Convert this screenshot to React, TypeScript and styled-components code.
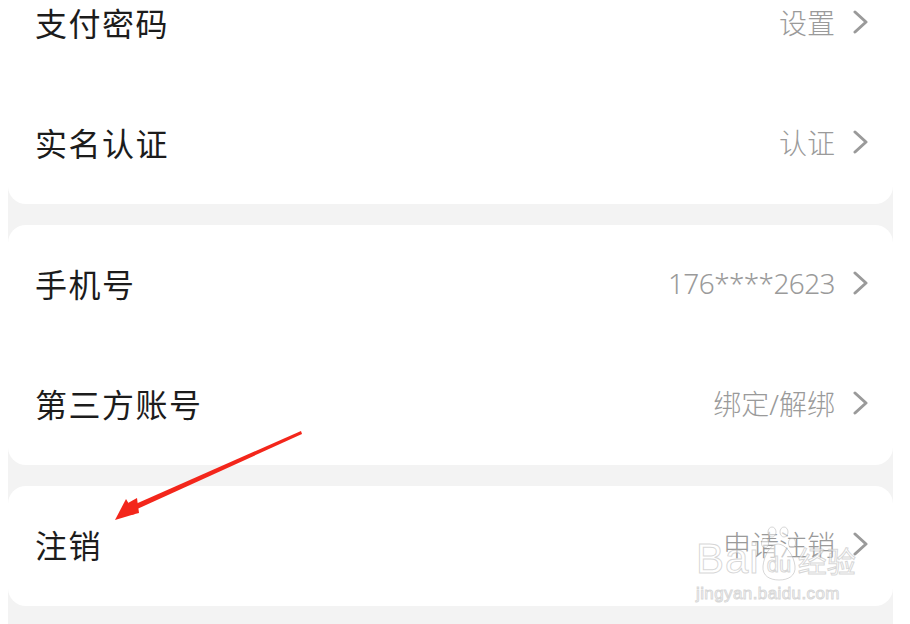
import styled, { createGlobalStyle } from 'styled-components';

const GlobalStyle = createGlobalStyle`
  html, body {
    margin: 0;
    padding: 0;
    background: #ffffff;
    overflow: hidden;
  }
  body {
    font-family: "Noto Sans", "Noto Sans CJK SC", sans-serif;
  }
`;

const Screen = styled.div`
  position: relative;
  width: 910px;
  height: 624px;
  overflow: hidden;
  background: #ffffff;
`;

const Panel = styled.div`
  margin: -36px 17px 0 8px;
  background: #f3f3f3;
  display: flex;
  flex-direction: column;
  gap: 21px;
  padding-bottom: 40px;
`;

const Card = styled.div`
  background: #ffffff;
  border-radius: 18px;
  display: flex;
  flex-direction: column;
`;

const Row = styled.div`
  height: 120px;
  box-sizing: border-box;
  display: flex;
  align-items: center;
  padding: 0 24px 5px 27px;
`;

const Label = styled.span`
  flex: 1;
  font-family: "Noto Sans CJK SC", sans-serif;
  font-size: 32px;
  color: #1c1c1c;
  letter-spacing: 1.5px;
`;

const Value = styled.span<{ $num?: boolean }>`
  font-family: "Noto Sans", "Noto Sans CJK SC", sans-serif;
  font-size: 28px;
  font-weight: 300;
  color: #9a9a9a;
  margin-right: 18px;
  letter-spacing: ${({ $num }) => ($num ? '-0.6px' : '0')};
`;

const Chevron = () => (
  <svg width="16" height="24" viewBox="0 0 16 24">
    <path d="M2 2 L13 12 L2 22" fill="none" stroke="#9a9a9a" strokeWidth="3" strokeLinecap="round" strokeLinejoin="round" />
  </svg>
);

const Arrow = styled.svg`
  position: absolute;
  left: 0;
  top: 0;
  pointer-events: none;
`;

const Watermark = styled.div`
  position: absolute;
  left: 696px;
  top: 524px;
  display: flex;
  flex-direction: column;
  align-items: flex-start;
  pointer-events: none;
  color: rgba(255, 255, 255, 0.55);
  -webkit-text-stroke: 1px rgba(175, 175, 175, 0.5);
  font-family: "Liberation Sans", "Noto Sans CJK SC", sans-serif;
`;

const MarkTop = styled.div`
  display: flex;
  align-items: flex-end;
  height: 58px;
`;

const MarkBai = styled.span`
  font-size: 42px;
  line-height: 46px;
  letter-spacing: 1px;
`;

const MarkJy = styled.span`
  font-family: "Noto Sans CJK SC", sans-serif;
  font-size: 29px;
  line-height: 44px;
`;

const MarkUrl = styled.div`
  font-size: 17px;
  line-height: 20px;
  letter-spacing: 0.4px;
  margin-top: 2px;
`;

const Paw = () => (
  <svg width="38" height="56" viewBox="0 0 38 56">
    <g fill="rgba(255,255,255,0.5)" stroke="rgba(175,175,175,0.5)" strokeWidth="1">
      <ellipse cx="12" cy="6" rx="4" ry="5" />
      <ellipse cx="24" cy="6" rx="4" ry="5" />
      <ellipse cx="5" cy="17" rx="3.5" ry="4.5" />
      <ellipse cx="32" cy="17" rx="3.5" ry="4.5" />
      <path d="M18 18 C10 18 4 30 3 40 C2 50 10 54 19 54 C28 54 36 50 35 40 C34 30 26 18 18 18 Z" />
    </g>
    <text x="19" y="46" textAnchor="middle" fontFamily="Liberation Sans, sans-serif" fontSize="22" fill="rgba(255,255,255,0.6)" stroke="rgba(175,175,175,0.5)" strokeWidth="1">du</text>
  </svg>
);

type Item = { label: string; value: string; num?: boolean };

const groups: Item[][] = [
  [
    { label: '支付密码', value: '设置' },
    { label: '实名认证', value: '认证' },
  ],
  [
    { label: '手机号', value: '176****2623', num: true },
    { label: '第三方账号', value: '绑定/解绑' },
  ],
  [{ label: '注销', value: '申请注销' }],
];

export default function App() {
  return (
    <Screen>
      <GlobalStyle />
      <Panel>
        {groups.map((g, gi) => (
          <Card key={gi}>
            {g.map((it) => (
              <Row key={it.label}>
                <Label>{it.label}</Label>
                <Value $num={it.num}>{it.value}</Value>
                <Chevron />
              </Row>
            ))}
          </Card>
        ))}
      </Panel>

      <Arrow width="910" height="624" viewBox="0 0 910 624">
        <polygon points="301,431 302,434 135,510 131,506" fill="#f3261b" />
        <polygon points="115,520 126,499 135,514" fill="#f3261b" />
        <polygon points="128,503 137,498 139,513 131,515" fill="#f3261b" />
      </Arrow>

      <Watermark>
        <MarkTop>
          <MarkBai>Bai</MarkBai>
          <Paw />
          <MarkJy>经验</MarkJy>
        </MarkTop>
        <MarkUrl>jingyan.baidu.com</MarkUrl>
      </Watermark>
    </Screen>
  );
}
